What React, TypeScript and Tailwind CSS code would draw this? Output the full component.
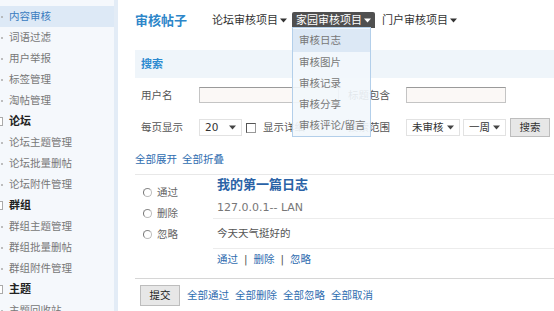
import React from "react";

const Caret = ({ color = "#333" }: { color?: string }) => (
  <svg width="7" height="5" viewBox="0 0 7 5" className="inline-block">
    <path d="M0 0.5 L7 0.5 L3.5 4.5 Z" fill={color} />
  </svg>
);

const sideItems: { label: string; header?: boolean; active?: boolean }[] = [
  { label: "内容审核", active: true },
  { label: "词语过滤" },
  { label: "用户举报" },
  { label: "标签管理" },
  { label: "淘帖管理" },
  { label: "论坛", header: true },
  { label: "论坛主题管理" },
  { label: "论坛批量删帖" },
  { label: "论坛附件管理" },
  { label: "群组", header: true },
  { label: "群组主题管理" },
  { label: "群组批量删帖" },
  { label: "群组附件管理" },
  { label: "主题", header: true },
  { label: "主题回收站" },
];

const Select = ({ text, w }: { text: string; w: string }) => (
  <div
    className={`${w} h-[17px] flex items-center justify-between pl-[5px] pr-[5px] border border-[#e2e2e2] bg-white text-[#333]`}
  >
    <span>{text}</span>
    <Caret color="#444" />
  </div>
);

const Radio = ({ label }: { label: string }) => (
  <div className="h-[21px] flex items-center gap-[5px] text-[#666]">
    <span className="w-[9px] h-[9px] rounded-full border border-[#bbb] border-l-[#777] border-t-[#888] bg-white" />
    <span>{label}</span>
  </div>
);

export default function App() {
  return (
    <div className="flex w-[554px] h-[311px] overflow-hidden bg-white font-['DejaVu_Sans','Noto_Sans_CJK_SC',sans-serif] text-[10.5px] leading-none">
      <aside className="w-[118px] shrink-0 bg-[#f5f8fc] border-r-[4px] border-[#e3ecf6] pt-[6px]">
        {sideItems.map((it) => (
          <div
            key={it.label}
            className={`h-[21px] flex items-center ${it.active ? "bg-[#dde9f6]" : ""}`}
          >
            {it.header ? (
              <>
                <span className="w-[9px] h-[9px] -ml-[6px] mr-[6px] border border-[#aaa] bg-white" />
                <span className="font-bold text-[#222] text-[11px]">{it.label}</span>
              </>
            ) : (
              <>
                <span className="w-[2px] h-[2px] ml-[1px] mr-[6px] rounded-full bg-[#aaa]" />
                <span className={it.active ? "text-[#3a7cc0]" : "text-[#777]"}>{it.label}</span>
              </>
            )}
          </div>
        ))}
      </aside>

      <main className="flex-1 pl-[17px] flex flex-col">
        {/* header */}
        <div className="h-[40px] flex items-center relative z-10">
          <span className="text-[13px] font-bold text-[#2d86c9] mr-[25px]">审核帖子</span>
          <span className="text-[11px] text-[#333] flex items-center gap-[2px]">
            论坛审核项目 <Caret />
          </span>
          <div className="relative ml-[5px]">
            <div className="h-[16px] px-[4px] bg-[#505050] rounded-t-[2px] text-white text-[11px] flex items-center gap-[2px]">
              家园审核项目 <Caret color="#fff" />
            </div>
            <div className="absolute left-0 top-[15px] w-[79px] border border-[#b3cfea] bg-[#f2f7fc]/90 pt-[1px] text-[#777]">
              {["审核日志", "审核图片", "审核记录", "审核分享", "审核评论/留言"].map((t, i) => (
                <div
                  key={t}
                  className={`flex items-center pl-[6px] ${i === 0 ? "h-[23px] bg-[#dce8f5]" : "h-[21px]"}`}
                >
                  {t}
                </div>
              ))}
            </div>
          </div>
          <span className="ml-[7px] text-[11px] text-[#333] flex items-center gap-[2px]">
            门户审核项目 <Caret />
          </span>
        </div>

        {/* search bar */}
        <div className="mt-[10px] h-[28px] bg-[#eff5fa] flex items-center pl-[6px]">
          <span className="font-bold text-[#2b8ad0] text-[11px]">搜索</span>
        </div>

        {/* row 1 */}
        <div className="mt-[9px] h-[16px] flex items-center pl-[6px] text-[#555]">
          <div className="w-[207px] flex items-center">
            <span className="w-[58px]">用户名</span>
            <div className="w-[140px] h-[16px] border border-[#c4c4c4] border-t-[#9a9a9a] bg-[#fbf8f6]" />
          </div>
          <span className="w-[58px]">标题包含</span>
          <div className="w-[100px] h-[16px] border border-[#c4c4c4] border-t-[#9a9a9a] bg-[#fbf8f6]" />
        </div>

        {/* row 2 */}
        <div className="mt-[15px] h-[19px] flex items-center pl-[6px] text-[#555]">
          <div className="w-[207px] flex items-center">
            <span className="w-[58px]">每页显示</span>
            <Select text="20" w="w-[43px]" />
            <span className="ml-[4px] w-[10px] h-[10px] border border-[#999] border-l-[#555] border-t-[#555] bg-white" />
            <span className="ml-[7px]">显示详细</span>
          </div>
          <span className="w-[58px]">搜索范围</span>
          <Select text="未审核" w="w-[54px]" />
          <div className="ml-[3px]">
            <Select text="一周" w="w-[43px]" />
          </div>
          <button className="ml-[4px] w-[40px] h-[19px] bg-[#e7e7e7] border border-[#bdbdbd] text-[#333] flex items-center justify-center">
            搜索
          </button>
        </div>

        {/* expand */}
        <div className="mt-[14px] h-[16px] flex items-center gap-[5px] text-[#2f6db0]">
          <span>全部展开</span>
          <span>全部折叠</span>
        </div>
        <div className="mt-[7px] border-b border-[#e8e8e8]" />

        {/* item */}
        <div className="flex">
          <div className="w-[78px] pl-[8px] pt-[7px]">
            <Radio label="通过" />
            <Radio label="删除" />
            <Radio label="忽略" />
          </div>
          <div className="flex-1">
            <div className="h-[18px] flex items-center pl-[4px] text-[13px] font-bold text-[#2a62a6]">
              我的第一篇日志
            </div>
            <div className="h-[26px] pt-[3px] flex items-center pl-[4px] border-b border-[#ececec] text-[#777] text-[11px]">
              127.0.0.1-- LAN
            </div>
            <div className="h-[30px] flex items-center pl-[4px] border-b border-[#ececec] text-[#555]">
              今天天气挺好的
            </div>
            <div className="h-[21px] flex items-center pl-[4px] text-[#2f6db0] gap-[6px]">
              <span>通过</span>
              <span className="text-[#555]">|</span>
              <span>删除</span>
              <span className="text-[#555]">|</span>
              <span>忽略</span>
            </div>
          </div>
        </div>

        {/* bottom */}
        <div className="mt-[8px] border-t border-[#d6d6d6] pt-[6px] pl-[5px] flex items-center">
          <button className="w-[40px] h-[21px] bg-[#e7e7e7] border border-[#bdbdbd] text-[#222] flex items-center justify-center">
            提交
          </button>
          <div className="ml-[7px] flex items-center gap-[6px] text-[#2f6db0]">
            <span>全部通过</span>
            <span>全部删除</span>
            <span>全部忽略</span>
            <span>全部取消</span>
          </div>
        </div>
      </main>
    </div>
  );
}
